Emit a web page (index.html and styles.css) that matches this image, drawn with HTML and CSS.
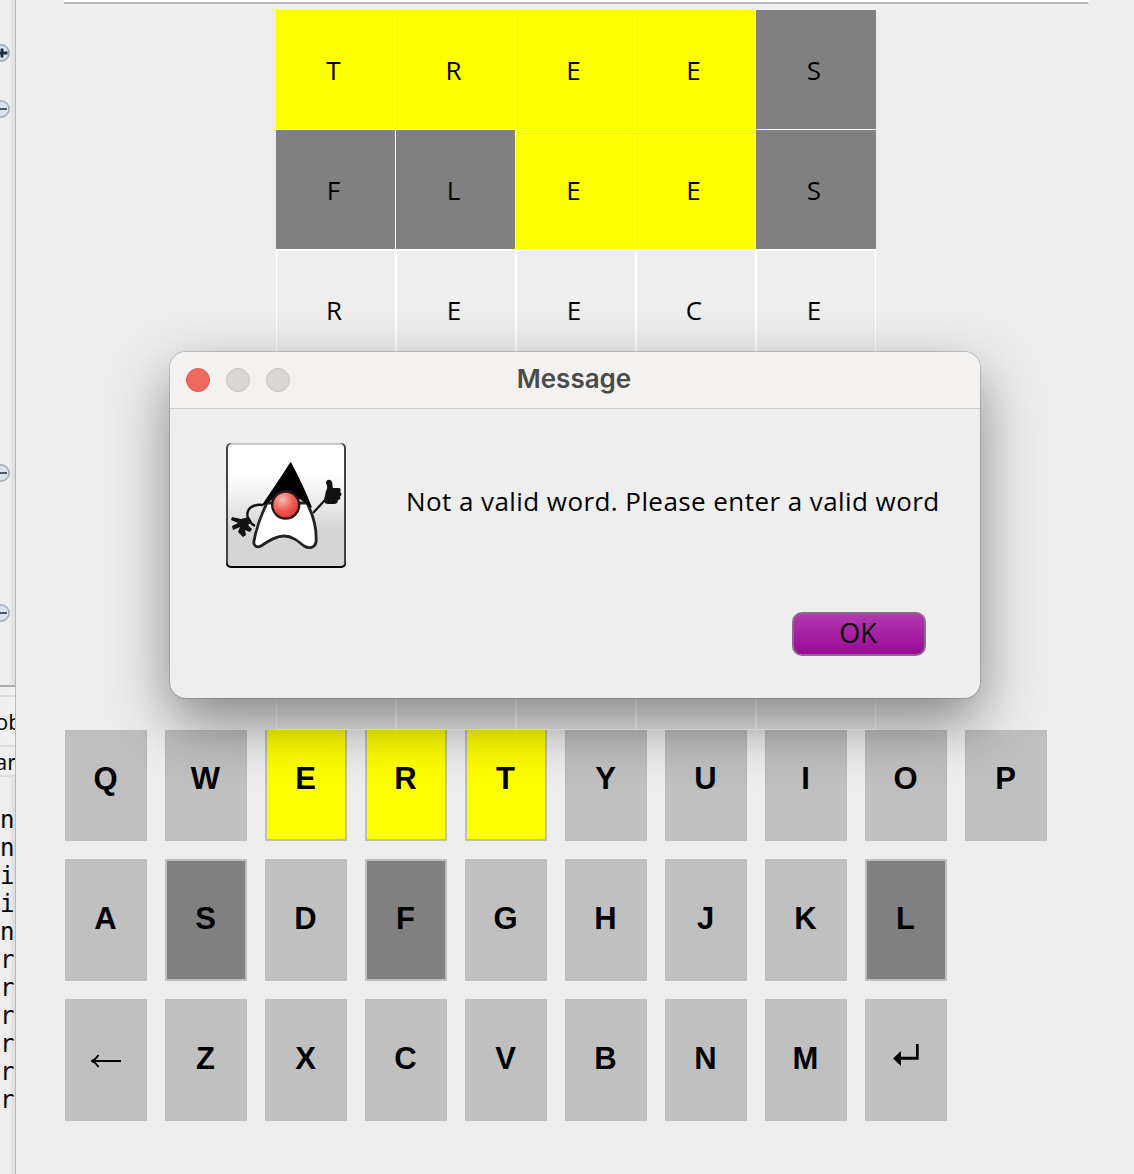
FILE: index.html
```html
<!DOCTYPE html>
<html lang="en">
<head>
  <meta charset="UTF-8">
  <title>Wordle</title>
  <meta name="viewport" content="width=device-width, initial-scale=1.0">
  <link rel="stylesheet" href="styles.css">
</head>
<body>

  <!-- sliver of the IDE behind the game window -->
  <aside class="ide">
    <svg class="fold fold-1" viewBox="-1 -9 10 18"><circle r="8.1" fill="#dde3ea" stroke="#9aa7b8" stroke-width="1.6"/><path d="M-1 0H6.5M1 -4.5V4.5" stroke="#1e2c44" stroke-width="2.8" fill="none"/></svg>
    <svg class="fold fold-2" viewBox="-1 -9 10 18"><circle r="8.1" fill="#dde3ea" stroke="#a4afbe" stroke-width="1.6"/><path d="M-1 0H6" stroke="#4c5a70" stroke-width="2" fill="none"/></svg>
    <svg class="fold fold-3" viewBox="-1 -9 10 18"><circle r="8.1" fill="#dde3ea" stroke="#a4afbe" stroke-width="1.6"/><path d="M-1 0H6" stroke="#4c5a70" stroke-width="2" fill="none"/></svg>
    <svg class="fold fold-4" viewBox="-1 -9 10 18"><circle r="8.1" fill="#dde3ea" stroke="#a4afbe" stroke-width="1.6"/><path d="M-1 0H6" stroke="#4c5a70" stroke-width="2" fill="none"/></svg>

    <div class="tabs">
      <div class="tab tab-first">ob</div>
      <div class="tab tab-second">ar</div>
    </div>
    <div class="console">
      <div>n</div><div>n</div><div>i</div><div>i</div><div>n</div><div>r</div>
      <div>r</div><div>r</div><div>r</div><div>r</div><div>r</div>
    </div>
  </aside>

  <main class="game">
    <div class="board-panel">
      <div class="topline"></div>

      <div class="board">
        <div class="cell yellow">T</div>
        <div class="cell yellow">R</div>
        <div class="cell yellow">E</div>
        <div class="cell yellow">E</div>
        <div class="cell gray">S</div>

        <div class="cell gray">F</div>
        <div class="cell gray">L</div>
        <div class="cell yellow">E</div>
        <div class="cell yellow">E</div>
        <div class="cell gray">S</div>

        <div class="cell">R</div>
        <div class="cell">E</div>
        <div class="cell">E</div>
        <div class="cell">C</div>
        <div class="cell">E</div>

        <div class="cell"></div><div class="cell"></div><div class="cell"></div><div class="cell"></div><div class="cell"></div>
        <div class="cell"></div><div class="cell"></div><div class="cell"></div><div class="cell"></div><div class="cell"></div>
        <div class="cell"></div><div class="cell"></div><div class="cell"></div><div class="cell"></div><div class="cell"></div>
      </div>
    </div>

    <div class="keyboard">
      <div class="keyrow">
        <div class="key">Q</div>
        <div class="key">W</div>
        <div class="key yellow">E</div>
        <div class="key yellow">R</div>
        <div class="key yellow">T</div>
        <div class="key">Y</div>
        <div class="key">U</div>
        <div class="key">I</div>
        <div class="key">O</div>
        <div class="key">P</div>
      </div>
      <div class="keyrow">
        <div class="key">A</div>
        <div class="key gray">S</div>
        <div class="key">D</div>
        <div class="key gray">F</div>
        <div class="key">G</div>
        <div class="key">H</div>
        <div class="key">J</div>
        <div class="key">K</div>
        <div class="key gray">L</div>
      </div>
      <div class="keyrow">
        <div class="key">
          <svg class="back-icon" viewBox="0 0 30 14" width="30" height="14"><path d="M2 7H30" stroke="#000" stroke-width="2" fill="none"/><path d="M7.5 1C6 3.5 3.5 6 .5 7C3.5 8 6 10.5 7.5 13" stroke="#000" stroke-width="1.8" fill="none"/></svg>
        </div>
        <div class="key">Z</div>
        <div class="key">X</div>
        <div class="key">C</div>
        <div class="key">V</div>
        <div class="key">B</div>
        <div class="key">N</div>
        <div class="key">M</div>
        <div class="key">
          <svg class="enter-icon" viewBox="0 0 26 23" width="26" height="23"><path d="M0 14.5L8 7V12.8H23V0H25.7V15.8H8V22Z" fill="#000"/></svg>
        </div>
      </div>
    </div>
  </main>

  <div class="dialog">
    <div class="titlebar">
      <span class="light red"></span>
      <span class="light"></span>
      <span class="light"></span>
      <span class="title">Message</span>
    </div>
    <div class="message">
      <div class="duke">
        <svg viewBox="226 443 120 125" width="120" height="125">
          <defs>
            <radialGradient id="nose" cx="0.38" cy="0.3" r="0.85">
              <stop offset="0" stop-color="#f8bcb4"/>
              <stop offset="0.5" stop-color="#ee5850"/>
              <stop offset="1" stop-color="#d42a2a"/>
            </radialGradient>
          </defs>
          <!-- right arm and thumbs up -->
          <path d="M313 513L326 499" stroke="#111" stroke-width="2.2" fill="none"/>
          <path d="M324 500L326 491C328 488 327 485 326 483C326 479 331 479 332 482C333 485 332 487 333 488H339C341 488 341 491 340 492C342 493 342 496 340 496C341 498 340 500 338 500C338 503 336 504 334 504H329C326 504 324 503 324 500Z" fill="#111"/>
          <!-- left arm and hand -->
          <path d="M263 505C257 504 250 506 248 511C246 516 249 523 255 526" stroke="#111" stroke-width="2.4" fill="none"/>
          <path d="M249 517L241 519L232 517L231 520L238 523L232 526L233 530L240 527L238 532L243 537L246 535L245 530L250 532L252 529L248 525L252 522Z" fill="#111"/>
          <!-- body -->
          <path d="M267 503C261 515 256 530 254 541C253 546 257 548 261 546C268 541 276 536 284 536C292 536 298 541 304 546C309 549 315 548 316 542C317 530 313 515 307 503Z" fill="#fff" stroke="#222" stroke-width="2.8" stroke-linejoin="round"/>
          <!-- hat -->
          <path d="M290.7 463C283 476 272 491 263 505C272 498 280 495 287 495C295 495 303 499 311 507C305 491 298 477 290.7 463Z" fill="#000" stroke="#000" stroke-width="1.5" stroke-linejoin="round"/>
          <!-- nose -->
          <circle cx="285.7" cy="505" r="13.5" fill="url(#nose)" stroke="#2a1a1a" stroke-width="2.4"/>
        </svg>
      </div>
      <p class="message-text">Not a valid word. Please enter a valid word</p>
    </div>
    <div class="actions">
      <button class="ok">OK</button>
    </div>
  </div>

</body>
</html>
```

FILE: styles.css
```css
html, body {
  margin: 0;
  height: 100%;
}
body {
  display: flex;
  width: 1134px;
  height: 1174px;
  overflow: hidden;
  background: #eeeeee;
  font-family: "Open Sans", Arial, sans-serif;
  color: #000;
}

/* IDE sliver on the left */
.ide {
  width: 15px;
  flex-shrink: 0;
  overflow: hidden;
  border-right: 1px solid #b9b9b9;
  background: linear-gradient(to right, #eeeeee 60%, #dcdcdc);
}
.fold {
  display: block;
  width: 10px;
  height: 18px;
}
.fold-1 { margin-top: 44px; }
.fold-2 { margin-top: 38px; }
.fold-3 { margin-top: 346px; }
.fold-4 { margin-top: 122px; }

.tabs {
  margin-top: 63px;
  padding-top: 8px;
  border-top: 2px solid #aaaaaa;
  background: #efefef;
}
.tab {
  border-top: 2px solid #dddddd;
  font-size: 22px;
  white-space: nowrap;
}
.tab-first {
  height: 48px;
  margin-left: -5px;
  line-height: 48px;
}
.tab-second {
  height: 28px;
  margin-left: -5px;
  line-height: 28px;
}
.console {
  padding-top: 29px;
  border-top: 2px solid #dddddd;
  font-family: "DejaVu Sans Mono", monospace;
  font-size: 24px;
  line-height: 28px;
}

/* game window */
.game {
  flex: 1;
  min-width: 0;
}
.board-panel {
  position: relative;
  z-index: 1;
  background: #eeeeee;
}
.topline {
  width: 1024px;
  height: 2px;
  margin-left: 48px;
  background: #fff;
  border-bottom: 2px solid #bbbbbb;
  border-right: 1px solid #fff;
}
.board {
  display: grid;
  grid-template-columns: repeat(5, 120px);
  grid-auto-rows: 120px;
  width: 600px;
  margin: 6px 0 0 260px;
}
.cell {
  display: flex;
  align-items: center;
  justify-content: center;
  box-sizing: border-box;
  padding-right: 4px;
  border: 1px solid #fff;
  font-size: 26px;
}
.cell.yellow {
  padding-top: 1px;
  background: #ffff00;
  border-width: 0 1px 1px 0;
}
.cell.gray {
  padding-top: 1px;
  background: #808080;
  border-width: 0 1px 1px 0;
}
.cell.gray:nth-child(5n) {
  border-right: 0;
}

.keyboard {
  display: flex;
  flex-direction: column;
  gap: 18px;
  margin: -11px 0 0 49px;
}
.keyrow {
  display: flex;
  gap: 18px;
}
.key {
  display: flex;
  align-items: center;
  justify-content: center;
  width: 82px;
  height: 122px;
  box-sizing: border-box;
  padding: 0 1px 2px 0;
  border: 2px solid #bebebe;
  background: #c0c0c0;
  font-family: "Liberation Sans", Arial, sans-serif;
  font-size: 31px;
  font-weight: bold;
}
.key.yellow {
  background: #ffff00;
}
.key.gray {
  background: #808080;
}
.back-icon {
  margin-top: 4px;
}
.enter-icon {
  margin: 0 0 8px 1px;
}

/* message dialog */
.dialog {
  position: absolute;
  left: 170px;
  top: 352px;
  z-index: 2;
  width: 810px;
  height: 346px;
  border-radius: 16px;
  background: #eeeeee;
  box-shadow: 0 0 0 1px rgba(0, 0, 0, 0.15), 0 24px 60px rgba(0, 0, 0, 0.45);
}
.titlebar {
  display: flex;
  align-items: center;
  gap: 16px;
  height: 57px;
  box-sizing: border-box;
  padding-left: 16px;
  position: relative;
  border-bottom: 1px solid #cfcfcf;
  border-radius: 16px 16px 0 0;
  background: #f3f2f0;
}
.light {
  width: 24px;
  height: 24px;
  box-sizing: border-box;
  border-radius: 50%;
  border: 1px solid #c5c4c2;
  background: #d9d8d6;
}
.light.red {
  border-color: #e0584e;
  background: #ee6a5f;
}
.title {
  position: absolute;
  left: 0;
  right: 2px;
  padding-bottom: 4px;
  text-align: center;
  font-family: "Inter", Arial, sans-serif;
  font-size: 26px;
  font-weight: 600;
  color: #4b4b4b;
}
.message {
  display: flex;
  align-items: flex-start;
  padding: 34px 0 0 56px;
}
.duke {
  width: 120px;
  height: 125px;
  box-sizing: border-box;
  overflow: hidden;
  border-radius: 5px;
  background: linear-gradient(to bottom, #fff 0%, #fff 25%, #d6d6d6 70%, #d4d4d4 100%);
  box-shadow: inset 0 -2px 0 #000, inset 2px 0 0 #444, inset -2px 0 0 #444, inset 0 2px 0 #ccc;
}
.duke svg {
  display: block;
}
.message-text {
  margin: 40px 0 0 60px;
  font-size: 26px;
  letter-spacing: 0.43px;
  line-height: 36px;
  white-space: nowrap;
}
.actions {
  display: flex;
  justify-content: flex-end;
  padding: 44px 54px 0 0;
}
.ok {
  width: 134px;
  height: 44px;
  padding: 0 2px 3px 0;
  border: 2px solid #8b6a8b;
  border-radius: 10px;
  background: linear-gradient(to bottom, #b338af, #9a0a96);
  font-family: "Open Sans", Arial, sans-serif;
  font-size: 27px;
  color: #000;
}
```
